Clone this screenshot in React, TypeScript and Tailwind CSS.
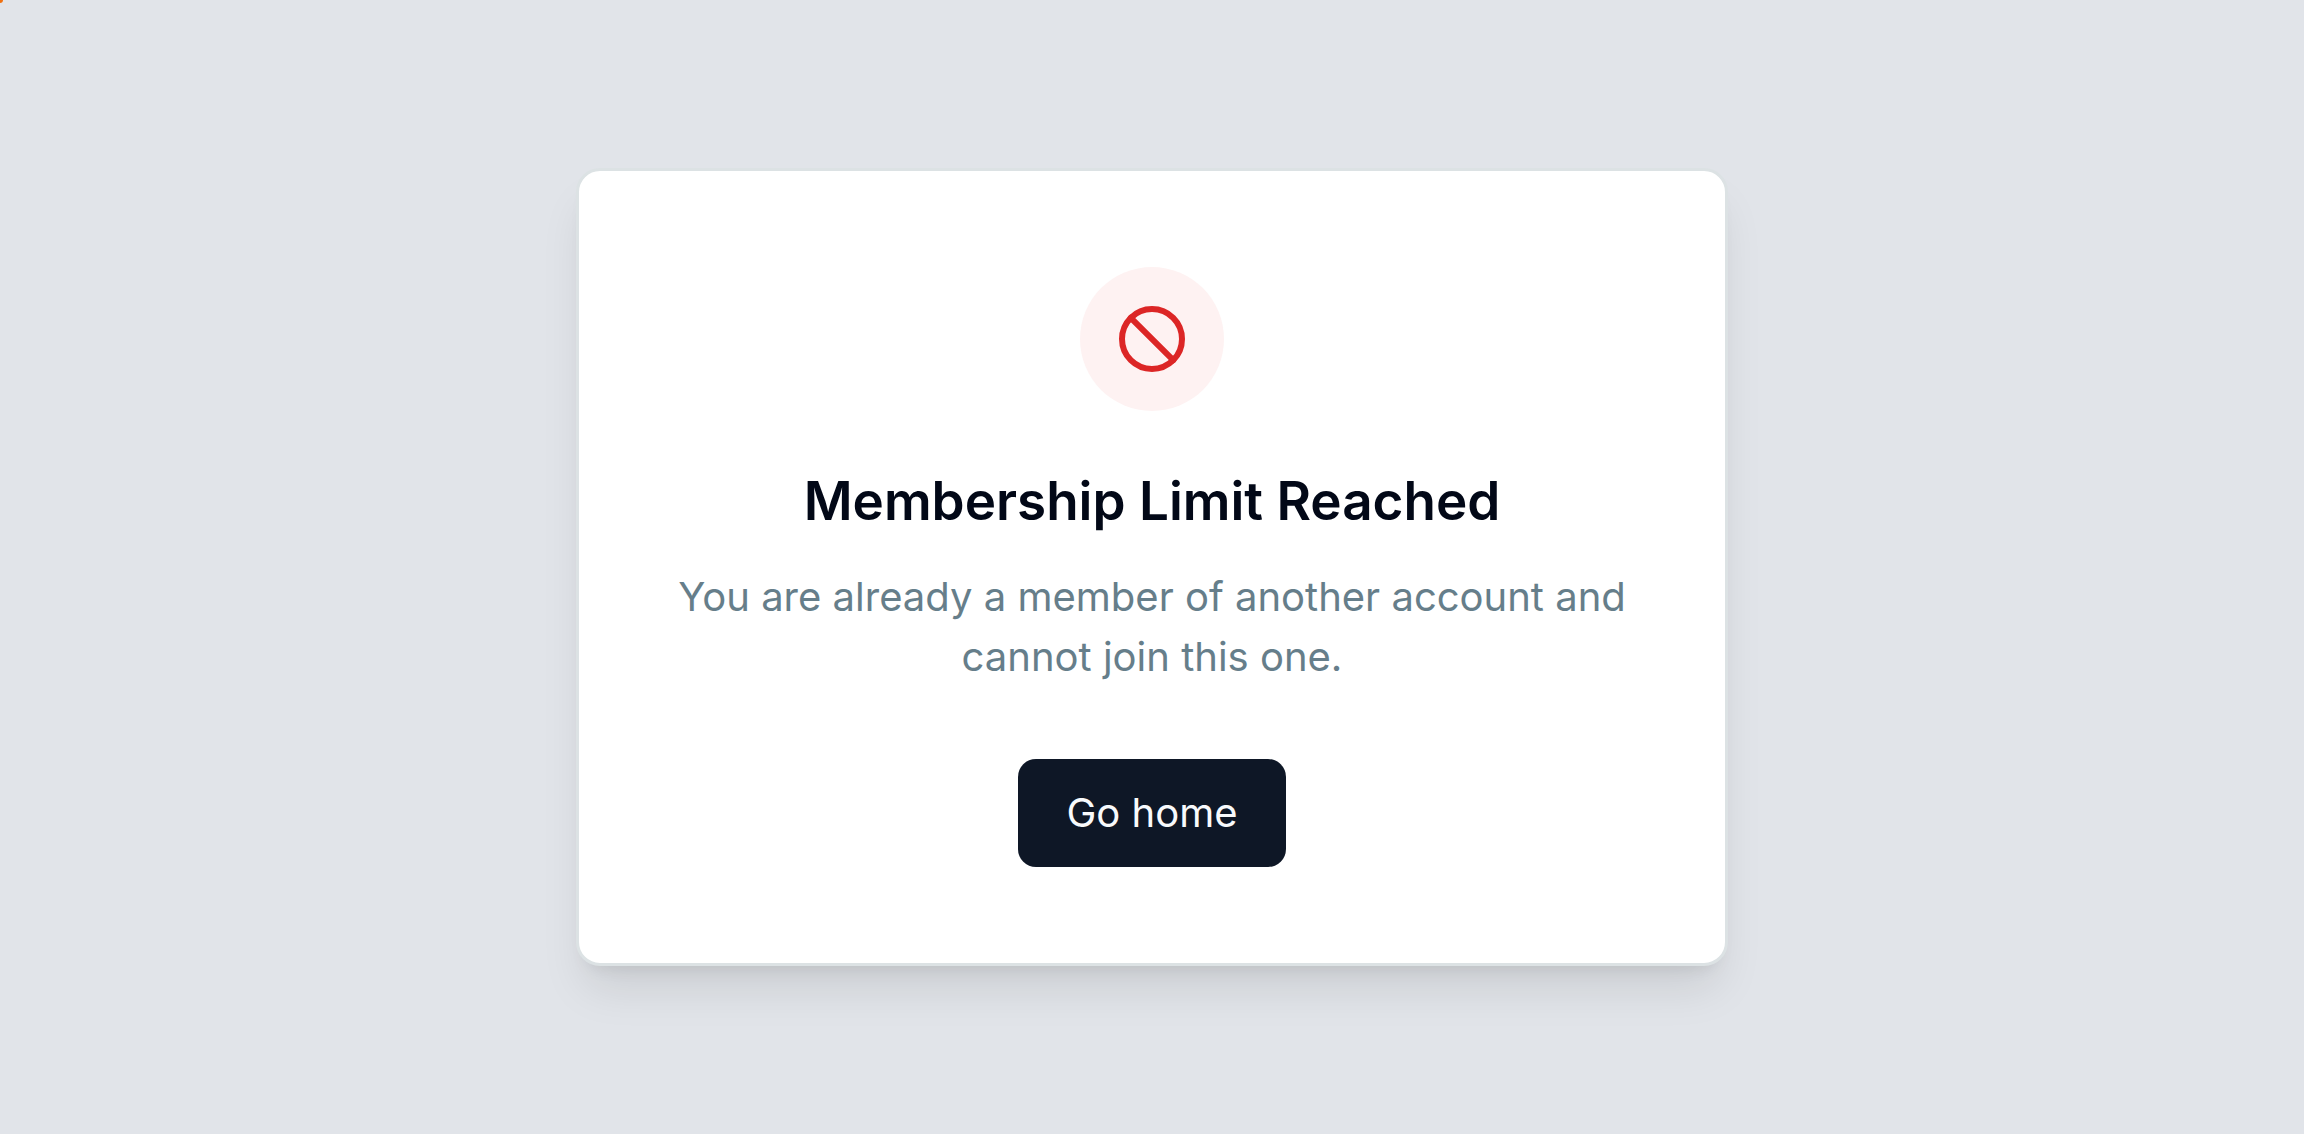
import { Ban } from 'lucide-react';

export default function App() {
  return (
    <div className="relative flex min-h-screen items-center justify-center bg-[#e1e4e9] font-['Inter','Liberation_Sans',sans-serif]">
      {/* Corner indicator */}
      <span className="absolute top-0 left-0 size-[3px] rounded-br-full bg-[#f07010]" />

      <main className="flex w-full max-w-6xl flex-col items-center rounded-3xl border-3 border-[#dce2e4] bg-white p-24 text-center shadow-[0_30px_45px_-9px_rgb(0_0_0/0.1),0_12px_18px_-12px_rgb(0_0_0/0.1)]">
        <div className="flex size-36 items-center justify-center rounded-full bg-[#fef2f2]">
          <Ban className="size-18 text-[#dc2626]" aria-hidden="true" />
        </div>

        <h1 className="mt-12 text-[53px] leading-[84px] font-semibold text-[#020817]">
          Membership Limit Reached
        </h1>
        <p className="mt-6 text-[40px] leading-[60px] text-[#667e8a]">
          You are already a member of another account and cannot join this one.
        </p>

        <button
          type="button"
          className="mt-18 h-27 rounded-[18px] bg-[#0e1726] px-12 text-[40px] leading-[60px] text-[#f8fafc]"
        >
          Go home
        </button>
      </main>
    </div>
  );
}
